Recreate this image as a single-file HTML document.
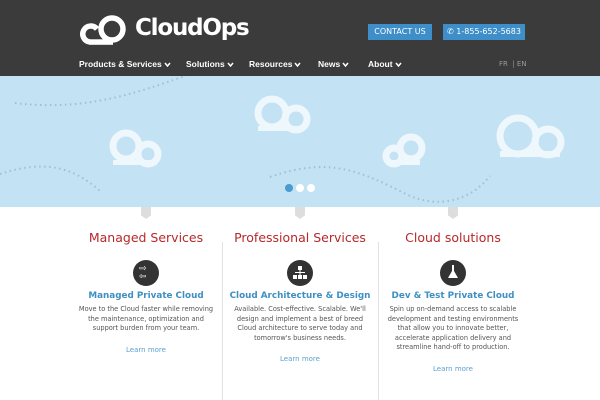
<!DOCTYPE html>
<html><head><meta charset="utf-8"><style>
*{margin:0;padding:0;box-sizing:border-box}
body{width:600px;height:400px;overflow:hidden;font-family:"DejaVu Sans","Liberation Sans",sans-serif;background:#fff;position:relative}
.hdr{position:absolute;left:0;top:0;width:600px;height:76px;background:#3b3b3b}
.logo{position:absolute;left:135px;top:15px;color:#fff;font:bold 23px "DejaVu Sans",sans-serif;letter-spacing:-1.2px}
.btn{position:absolute;top:24px;height:16px;background:#3d8ec9;color:#fff;font-size:8px;line-height:16px;text-align:center}
.nav{position:absolute;top:59px;color:#fff;font:bold 8.5px "Liberation Sans",sans-serif}
.nav svg{vertical-align:0px;margin-left:2px}
.lang{position:absolute;left:499px;top:60px;font-size:7px;color:#999}
.ban{position:absolute;left:0;top:76px;width:600px;height:131px;background:#c3e2f4;overflow:hidden}
.col{position:absolute;top:230px;width:150px;text-align:center}
.col h2{font-weight:normal;color:#b8282b;font-size:12.5px;white-space:nowrap}
.ic{width:26px;height:26px;border-radius:50%;background:#333;margin:15px auto 0;position:relative}
.col h3{color:#3f8fc2;font-size:8.8px;font-weight:bold;margin-top:5px;white-space:nowrap}
.col p{font-size:6.6px;color:#555;line-height:9.6px;margin:4px auto 0;width:136px}
.col a{display:block;font-size:7px;color:#5aa2cf;margin-top:12px}
.div{position:absolute;top:242px;width:1px;height:158px;background:#e2e2e2}
.tab{position:absolute;top:207px;width:10px;height:12px;background:#ddd;clip-path:polygon(0 0,100% 0,100% 70%,50% 100%,0 70%)}
</style></head><body>
<div class="hdr">
<svg style="position:absolute;left:80px;top:15px" width="48" height="30" viewBox="0 0 48 30"><path d="M10 27 A8 8 0 1 1 17 14" fill="none" stroke="#fff" stroke-width="5.5"/><circle cx="32" cy="14" r="11" fill="none" stroke="#fff" stroke-width="5.5"/><rect x="9" y="24.3" width="24" height="5.5" fill="#fff"/></svg>
<div class="logo">CloudOps</div>
<div class="btn" style="left:368px;width:64px">CONTACT US</div>
<div class="btn" style="left:443px;width:82px">&#9990; 1-855-652-5683</div>
<div class="nav" style="left:79px">Products &amp; Services<svg width="7" height="5"><path d="M1 1l2.5 3L6 1" stroke="#fff" stroke-width="1.5" fill="none"/></svg></div>
<div class="nav" style="left:186px">Solutions<svg width="7" height="5"><path d="M1 1l2.5 3L6 1" stroke="#fff" stroke-width="1.5" fill="none"/></svg></div>
<div class="nav" style="left:249px">Resources<svg width="7" height="5"><path d="M1 1l2.5 3L6 1" stroke="#fff" stroke-width="1.5" fill="none"/></svg></div>
<div class="nav" style="left:318px">News<svg width="7" height="5"><path d="M1 1l2.5 3L6 1" stroke="#fff" stroke-width="1.5" fill="none"/></svg></div>
<div class="nav" style="left:368px">About<svg width="7" height="5"><path d="M1 1l2.5 3L6 1" stroke="#fff" stroke-width="1.5" fill="none"/></svg></div>
<div class="lang">FR &nbsp;| EN</div>
</div>
<div class="ban">
<svg width="600" height="131" viewBox="0 0 600 131">
<g fill="none" stroke="#9fbfd6" stroke-width="2" stroke-dasharray="1.5 3.5">
<path d="M15 27 C80 35 130 20 190 -2"/>
<path d="M0 98 C40 85 70 88 100 115"/>
<path d="M270 101 C330 80 360 95 410 120 C440 132 470 125 490 100"/>
</g>
<g fill="none" stroke="#eef7fc" stroke-width="7">
<circle cx="126" cy="70" r="13"/><circle cx="148" cy="78" r="10"/>
<circle cx="272" cy="37" r="14"/><circle cx="296" cy="43" r="11"/>
<circle cx="394" cy="80" r="8"/><circle cx="411" cy="72" r="11"/>
<circle cx="518" cy="60" r="18"/><circle cx="548" cy="66" r="13"/>
</g>
<g fill="#eef7fc"><rect x="113" y="84" width="44" height="5"/><rect x="258" y="50" width="46" height="5"/><rect x="386" y="84" width="34" height="5"/><rect x="500" y="75" width="60" height="6"/></g>
<circle cx="289" cy="112" r="4" fill="#4b9ad0"/><circle cx="300" cy="112" r="4" fill="#fff"/><circle cx="311" cy="112" r="4" fill="#fff"/>
</svg>
</div>
<div class="tab" style="left:141px"></div><div class="tab" style="left:295px"></div><div class="tab" style="left:448px"></div>
<div class="div" style="left:222px"></div><div class="div" style="left:378px"></div>
<div class="col" style="left:71px"><h2>Managed Services</h2><div class="ic"><span style="position:absolute;left:6px;top:5px;color:#fff;font-size:9px;line-height:8px">⇨<br>⇦</span></div><h3>Managed Private Cloud</h3><p>Move to the Cloud faster while removing the maintenance, optimization and support burden from your team.</p><a>Learn more</a></div>
<div class="col" style="left:224px;width:152px"><h2>Professional Services</h2><div class="ic"><svg style="position:absolute;left:6px;top:6px" width="14" height="14"><g fill="#fff"><rect x="5" y="0" width="4" height="4"/><rect x="0" y="9" width="4" height="4"/><rect x="5" y="9" width="4" height="4"/><rect x="10" y="9" width="4" height="4"/><rect x="2" y="6" width="10" height="1"/><rect x="6.5" y="4" width="1" height="5"/></g></svg></div><h3>Cloud Architecture &amp; Design</h3><p>Available. Cost-effective. Scalable. We'll design and implement a best of breed Cloud architecture to serve today and tomorrow's business needs.</p><a>Learn more</a></div>
<div class="col" style="left:378px"><h2>Cloud solutions</h2><div class="ic"><svg style="position:absolute;left:7px;top:5px" width="12" height="16"><path d="M5 0h2v6l4 7H1l4-7z" fill="#fff"/></svg></div><h3>Dev &amp; Test Private Cloud</h3><p>Spin up on-demand access to scalable development and testing environments that allow you to innovate better, accelerate application delivery and streamline hand-off to production.</p><a>Learn more</a></div>
</body></html>
